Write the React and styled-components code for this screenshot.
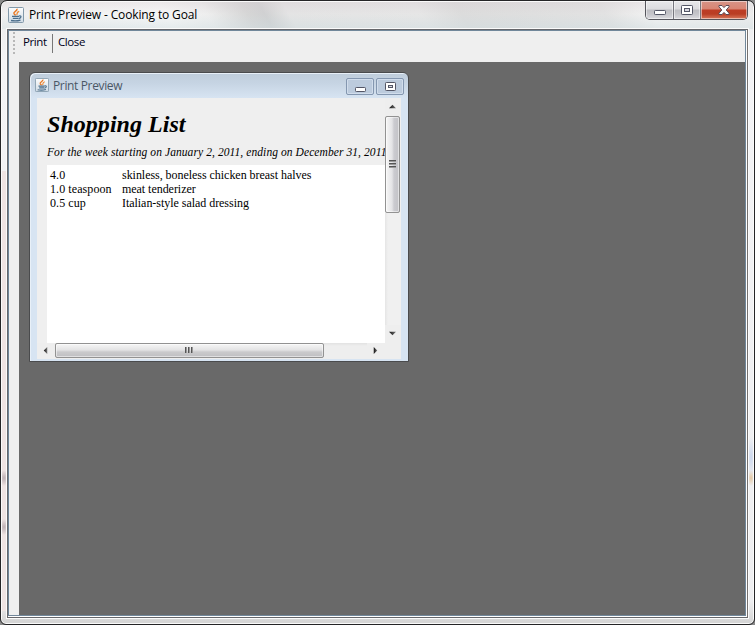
import React from "react";
import styled, { createGlobalStyle, css } from "styled-components";

const Global = createGlobalStyle`
  * { box-sizing: border-box; }
  body { margin: 0; background: #8a8a8a; overflow: hidden; }
`;

const Window = styled.div`
  width: 755px;
  height: 625px;
  display: flex;
  flex-direction: column;
  padding: 0 5px 5px;
  border: 1px solid #252527;
  border-radius: 7px 7px 6px 6px;
  box-shadow: inset 0 0 0 1px #fafafa;
  background:
    radial-gradient(ellipse 5px 8px at 3px 477px, #bdb0b4, transparent),
    radial-gradient(ellipse 5px 8px at 3px 526px, #bdb0b4, transparent),
    radial-gradient(ellipse 4px 8px at 750px 477px, #e3c8a4, transparent),
    radial-gradient(ellipse 5px 20px at 750px 456px, #ccd8ee, transparent),
    linear-gradient(90deg, #efe4e3 0 10px, transparent 10px) 0 170px / 10px 440px no-repeat,
    linear-gradient(#e8e9ea, #f3f3f5 60px, #eeeef0 600px, #d6d6d6 620px);
  background-clip: padding-box;
  font-family: "Open Sans", "Noto Sans", sans-serif;
  font-size: 12px;
  color: #000;
`;

const TitleBar = styled.div`
  flex: none;
  display: flex;
  align-items: flex-start;
  height: 27px;
  margin: 1px -4px 0;
  padding-left: 6px;
  border-radius: 5px 5px 0 0;
  background:
    linear-gradient(rgba(215, 205, 210, 0.35), transparent 45%, rgba(205, 220, 224, 0.45)),
    linear-gradient(60deg, #f0f0f0 0, #f6f6f6 150px, #eeeeee 185px, #d6d6d6 220px, #d0d1d2 235px, #e4e4e4 256px, #e6e6e6 370px, #dcdcdc 405px, #e2e2e2 530px, #f2f2f2 570px, #ececec 100%);
`;

const Title = styled.div`
  flex: 1;
  white-space: nowrap;
  ${(p) =>
    p.$inner
      ? css`
          padding: 4px 0 0 4px;
          font-size: 12px;
          line-height: 17px;
          letter-spacing: -0.36px;
          color: #4b5766;
        `
      : css`
          padding: 4px 0 0 5px;
          line-height: 17px;
          letter-spacing: -0.14px;
        `}
`;

const IconBox = styled.div`
  display: flex;
  margin-top: ${(p) => p.$top}px;
`;

const Controls = styled.div`
  display: flex;
  flex: none;
  width: 103px;
  height: 19px;
  margin: -1px 5px 0 0;
  border: 1px solid #55555c;
  border-top: 0;
  border-radius: 0 0 5px 5px;
  overflow: hidden;
`;

const Control = styled.div`
  display: flex;
  align-items: center;
  justify-content: center;
  padding-bottom: 1px;
  width: ${(p) => p.$w}px;
  border-right: ${(p) => (p.$close ? "0" : "1px solid #77777e")};
  box-shadow: inset 0 0 0 1px rgba(255, 255, 255, 0.5);
  background: ${(p) =>
    p.$close
      ? "linear-gradient(#d79487, #d98573 8px, #bd3c25 9px, #b93d24 13px, #d9785c)"
      : "linear-gradient(#e8e8ea, #dcdcdf 8px, #bdbdc2 9px, #c5c5ca 13px, #dadade)"};
`;

const Client = styled.div`
  flex: 1;
  display: flex;
  flex-direction: column;
  margin: 0 1px 1px;
  border: 1px solid #66676b;
  outline: 1px solid #fbfbfb;
  background: #fff;
  border-right-color: #75706e;
  padding: 0 1px 1px 0;
`;

const Content = styled.div`
  flex: 1;
  display: flex;
  flex-direction: column;
  border: 1px solid #71879a;
  background: #efefef;
`;

const Toolbar = styled.div`
  flex: none;
  display: flex;
  height: 31px;
  padding-left: 4px;
`;

const Grip = styled.div`
  width: 2px;
  height: 23px;
  margin-top: 1px;
  background: repeating-linear-gradient(#b8b8b8 0 2px, transparent 2px 4px);
`;

const Tool = styled.div`
  font-size: 11.5px;
  line-height: 16px;
  padding-top: 3px;
  letter-spacing: ${(p) => p.$track}px;
  color: #000018;
  width: ${(p) => p.$w}px;
  margin-left: ${(p) => p.$gap}px;
`;

const Separator = styled.div`
  width: 1px;
  height: 19px;
  margin-top: 3px;
  background: #777;
`;

const Desktop = styled.div`
  flex: 1;
  margin-left: 10px;
  padding: 10px;
  background: #696969;
`;

const Frame = styled.div`
  width: 380px;
  height: 290px;
  padding: 0 7px 1px 7px;
  border: 1px solid #4a4b4d;
  border-radius: 6px 6px 0 0;
  box-shadow: inset 1px 1px 0 #e8f0f8;
  background: linear-gradient(#bfcddb, #c6d4e3 10px, #d7e4f2 25px, #d7e4f2);
`;

const FrameTitle = styled.div`
  display: flex;
  height: 25px;
  margin-left: -2px;
`;

const FrameControls = styled.div`
  display: flex;
  gap: 2px;
  margin: 5px -3px 0 0;
`;

const FrameControl = styled.div`
  display: flex;
  align-items: center;
  justify-content: center;
  width: 28px;
  height: 17px;
  border: 1px solid #8497b0;
  border-radius: 2px;
  box-shadow: inset 0 0 0 1px rgba(226, 236, 247, 0.55);
  background: #bccbdd;
`;

const ScrollArea = styled.div`
  display: grid;
  grid-template-columns: 348px 16px;
  grid-template-rows: 245px 16px;
  height: 261px;
  background: #eee;
`;

const Page = styled.div`
  overflow: hidden;
  padding-left: 10px;
  background: #efefef;
  font-family: "Liberation Serif", "Times New Roman", serif;
`;

const Heading = styled.h1`
  margin: 0;
  height: 47px;
  padding-top: 12px;
  font-size: 24px;
  font-style: italic;
  line-height: 28px;
  letter-spacing: 0.04px;
  white-space: nowrap;
`;

const Period = styled.div`
  height: 20px;
  font-size: 11.5px;
  font-style: italic;
  line-height: 15px;
  letter-spacing: 0.08px;
  white-space: nowrap;
`;

const Items = styled.div`
  display: grid;
  grid-template-columns: 72px 1fr;
  grid-auto-rows: 14px;
  align-content: start;
  height: 178px;
  padding: 3px;
  background: #fff;
  font-size: 12px;
  line-height: 14px;
`;

const Amount = styled.span`
  letter-spacing: 0.08px;
`;

const Ingredient = styled.span`
  letter-spacing: -0.04px;
`;

const Bar = styled.div`
  display: flex;
  flex-direction: ${(p) => (p.$vertical ? "column" : "row")};
  background: ${(p) => (p.$vertical ? "linear-gradient(90deg, #e5e5e5, #f0f0f0 3px)" : "linear-gradient(#e2e2e2, #eee 3px)")};
`;

const Arrow = styled.div`
  flex: none;
  display: flex;
  align-items: center;
  justify-content: center;
  width: ${(p) => p.$w}px;
  height: ${(p) => p.$h}px;
  padding: 0 1px 1px 0;
  background: #eee;
`;

const Thumb = styled.div`
  flex: none;
  display: flex;
  align-items: center;
  justify-content: center;
  border: 1px solid #929292;
  border-radius: 2px;
  box-shadow: inset 0 0 0 1px rgba(255, 255, 255, 0.5);
  ${(p) =>
    p.$vertical
      ? css`
          height: 97px;
          width: 15px;
          background: linear-gradient(90deg, #f6f6f6, #e4e4e6 6px, #cbcbd0 8px, #c2c2c6);
        `
      : css`
          width: 269px;
          height: 15px;
          background: linear-gradient(#f6f6f6, #e3e3e4 6px, #cacacc 8px, #bfbfc2);
        `}
`;

const Fill = styled.div`
  flex: 1;
`;

function JavaIcon({ size }) {
  return (
    <svg width={size} height={size} viewBox="0 0 16 16">
      <defs>
        <linearGradient id="tile" x2="0" y2="1">
          <stop stopColor="#fdfdfd" />
          <stop offset="1" stopColor="#cfdbe5" />
        </linearGradient>
      </defs>
      <rect x=".5" y=".5" width="15" height="15" rx="1" fill="url(#tile)" stroke="#8299aa" />
      <path d="M9 1.800C9.800 4 4.800 4.600 6 6.600Q6.600 7.500 7.600 8.300" fill="none" stroke="#e87722" strokeWidth="1.500" />
      <path d="M11.200 4.300C7.800 5.400 9.900 6.400 8.600 8" fill="none" stroke="#ee8a34" strokeWidth="1.300" />
      <path d="M4 9.300h7M4.800 11.300h5.700M3 13.500Q8 14.500 12.500 13.100" fill="none" stroke="#4c6f8c" strokeWidth="1.300" />
      <path d="M11 9C14 8.400 13.300 11 10.700 11.600" fill="none" stroke="#4c6f8c" strokeWidth="1.200" />
    </svg>
  );
}

const MinIcon = ({ w = 12, h = 5 }) => (
  <svg width={w} height={h + 7} viewBox={`0 0 ${w} ${h + 7}`}>
    <rect x=".5" y="6.5" width={w - 1} height={h - 1} rx=".8" fill="#fff" stroke="#535666" />
  </svg>
);

const MaxIcon = ({ w = 12, h = 10 }) => (
  <svg width={w} height={h} viewBox={`0 0 ${w} ${h}`}>
    <rect x=".5" y=".5" width={w - 1} height={h - 1} rx=".8" fill="#fff" stroke="#535666" />
    <rect x="3.500" y="3.500" width={w - 7} height={h - 7} fill="#d8d8e0" stroke="#535666" />
  </svg>
);

const CloseIcon = () => (
  <svg width="12" height="10" viewBox="0 0 12 10">
    <path
      d="M1 .5h3L6 2.6 8 .5h3v1.3L8.2 5 11 8.200v1.300H8L6 7.400 4 9.500H1V8.200L3.800 5 1 1.800z"
      fill="#fff"
      stroke="#5b4a55"
    />
  </svg>
);

const arrows = {
  up: "M0 6 4 2 8 6z",
  down: "M0 2h8L4 6z",
  left: "M6 0 2 4 6 8z",
  right: "M2 0 6 4 2 8z",
};

const ArrowIcon = ({ dir }) => (
  <svg width="7" height="7" viewBox="0 0 8 8">
    <defs>
      <linearGradient id="arrow">
        <stop stopColor="#111" />
        <stop offset="1" stopColor="#777" />
      </linearGradient>
    </defs>
    <path d={arrows[dir]} fill="url(#arrow)" />
  </svg>
);

const GripIcon = ({ vertical }) => (
  <svg width="9" height="9" viewBox="0 0 9 9" stroke="#555" shapeRendering="crispEdges">
    <path d={vertical ? "M1 .5h7M1 3.500h7M1 6.500h7" : "M.5 1v6M3.500 1v6M6.500 1v6"} />
    <path d={vertical ? "M1 1.500h7M1 4.500h7M1 7.500h7" : "M1.500 1v6M4.500 1v6M7.500 1v6"} stroke="#999" />
  </svg>
);

const items = [
  ["4.0", "skinless, boneless chicken breast halves"],
  ["1.0 teaspoon", "meat tenderizer"],
  ["0.5 cup", "Italian-style salad dressing"],
];

function PreviewFrame() {
  return (
    <Frame>
      <FrameTitle>
        <IconBox $top={5}>
          <JavaIcon size={14} />
        </IconBox>
        <Title $inner>Print Preview</Title>
        <FrameControls>
          <FrameControl><MinIcon w={11} /></FrameControl>
          <FrameControl><MaxIcon w={11} h={9} /></FrameControl>
        </FrameControls>
      </FrameTitle>
      <ScrollArea>
        <Page>
          <Heading>Shopping List</Heading>
          <Period>For the week starting on January 2, 2011, ending on December 31, 2011</Period>
          <Items>
            {items.map(([amount, name]) => (
              <React.Fragment key={name}>
                <Amount>{amount}</Amount>
                <Ingredient>{name}</Ingredient>
              </React.Fragment>
            ))}
          </Items>
        </Page>
        <Bar $vertical>
          <Arrow $w={16} $h={18}><ArrowIcon dir="up" /></Arrow>
          <Thumb $vertical><GripIcon vertical /></Thumb>
          <Fill />
          <Arrow $w={16} $h={18}><ArrowIcon dir="down" /></Arrow>
        </Bar>
        <Bar>
          <Arrow $w={18} $h={16}><ArrowIcon dir="left" /></Arrow>
          <Thumb><GripIcon /></Thumb>
          <Fill />
          <Arrow $w={18} $h={16}><ArrowIcon dir="right" /></Arrow>
        </Bar>
      </ScrollArea>
    </Frame>
  );
}

export default function App() {
  return (
    <>
      <Global />
      <Window>
        <TitleBar>
          <IconBox $top={5}>
            <JavaIcon size={16} />
          </IconBox>
          <Title>Print Preview - Cooking to Goal</Title>
          <Controls>
            <Control $w={28}><MinIcon /></Control>
            <Control $w={27}><MaxIcon /></Control>
            <Control $w={46} $close><CloseIcon /></Control>
          </Controls>
        </TitleBar>
        <Client>
          <Content>
            <Toolbar>
              <Grip />
              <Tool $w={29} $gap={8} $track={-0.4}>Print</Tool>
              <Separator />
              <Tool $w={30} $gap={5} $track={-0.4}>Close</Tool>
            </Toolbar>
            <Desktop>
              <PreviewFrame />
            </Desktop>
          </Content>
        </Client>
      </Window>
    </>
  );
}
